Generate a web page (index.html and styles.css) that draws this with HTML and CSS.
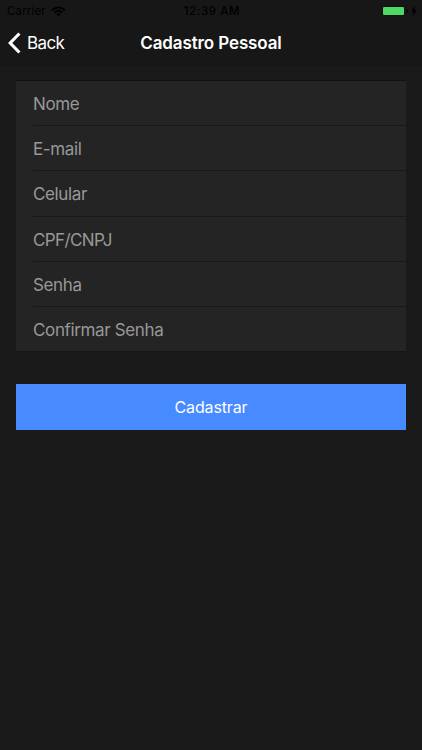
FILE: index.html
```html
<!DOCTYPE html>
<html lang="pt-BR">
<head>
<meta charset="utf-8">
<meta name="viewport" content="width=device-width">
<title>Cadastro Pessoal</title>
<link rel="stylesheet" href="styles.css">
</head>
<body>
<header class="header">
  <div class="status">
    <div class="carrier"><span>Carrier</span>
      <svg class="wifi" viewBox="0 0 15 11" width="15" height="11"><path d="M1 4.2Q7.5-1.3 14 4.2M3.4 6.6Q7.5 3 11.6 6.6" fill="none" stroke="#000" stroke-width="1.9"/><path d="M5.3 8.2Q7.5 6.3 9.7 8.2L7.5 10.5z" fill="#000"/></svg>
    </div>
    <div class="clock">12:39 AM</div>
    <div class="power">
      <span class="battery"></span><span class="cap"></span>
      <svg viewBox="0 0 6 10" width="6" height="10"><path d="M4 0 0 5.6h2.5L1.8 10 6 4.2H3.5z" fill="#000"/></svg>
    </div>
  </div>
  <nav class="toolbar">
    <a class="back"><svg viewBox="0 0 13 22" width="13" height="22"><path d="M11.4 1.5 2.2 11l9.2 9.5" fill="none" stroke="#fff" stroke-width="3.1"/></svg><span>Back</span></a>
    <h1>Cadastro Pessoal</h1>
  </nav>
</header>
<main>
  <div class="list">
    <div class="item"><span>Nome</span></div>
    <div class="item"><span>E-mail</span></div>
    <div class="item"><span>Celular</span></div>
    <div class="item"><span class="doc">CPF/CNPJ</span></div>
    <div class="item"><span>Senha</span></div>
    <div class="item"><span>Confirmar Senha</span></div>
  </div>
  <button class="submit">Cadastrar</button>
</main>
</body>
</html>
```
FILE: styles.css
```css
* { box-sizing: border-box; }
body { margin: 0; height: 750px; overflow: hidden; background: #1a1a1a; color: #fff; font-family: Inter, "Liberation Sans", sans-serif; }
.header { height: 66px; background: #171717; border-bottom: 1px solid #151515; }
.status { height: 21px; display: grid; grid-template-columns: 1fr auto 1fr; align-items: center; padding: 1px 5px 0 7px; color: #000; font-size: 11.5px; line-height: 20px; }
.carrier { display: flex; align-items: center; gap: 5px; letter-spacing: .15px; }
.clock { font-weight: 500; letter-spacing: .6px; }
.power { display: flex; align-items: center; justify-content: flex-end; }
.battery { width: 23px; height: 10px; border: 1px solid #101010; border-radius: 2px; background: #4cd964; }
.cap { width: 2px; height: 4px; margin: 0 3px 0 1px; background: #0c0c0c; }
.toolbar { height: 44px; display: grid; grid-template-columns: 1fr auto 1fr; align-items: center; padding: 0 8px; }
.back { display: flex; align-items: center; gap: 6px; font-size: 17px; letter-spacing: -.6px; }
h1 { margin: 0; font-size: 17px; line-height: 24px; font-weight: 600; letter-spacing: -.12px; }
main { padding: 14px 16px; }
.list { background: #242424; border-top: 1px solid #121212; border-bottom: 1px solid #161616; height: 272px; padding-left: 17px; display: grid; grid-template-rows: 45px 45px 46px 45px 45px 44px; }
.item { display: flex; align-items: center; border-bottom: 1px solid #181818; padding-top: 1px; color: #989898; font-size: 17px; letter-spacing: -.36px; }
.item:last-child { border-bottom: 0; }
.doc { letter-spacing: -.6px; }
.submit { display: block; width: 100%; height: 46px; margin-top: 32px; padding: 0; border: 0; background: #488aff; color: #fff; font: 400 16px Inter, "Liberation Sans", sans-serif; letter-spacing: -.15px; }
```
